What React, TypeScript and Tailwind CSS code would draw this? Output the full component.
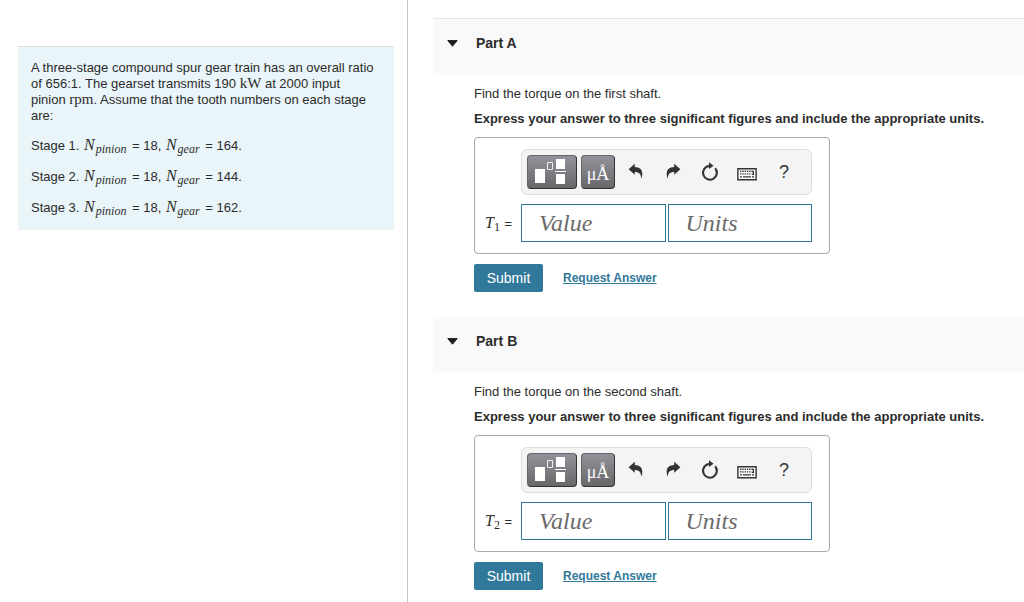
import type { ReactNode } from 'react'

const STAGES = [
  { id: 1, pinion: 18, gear: 164 },
  { id: 2, pinion: 18, gear: 144 },
  { id: 3, pinion: 18, gear: 162 },
]

const PARTS = [
  { letter: 'A', shaft: 'first', index: 1 },
  { letter: 'B', shaft: 'second', index: 2 },
]

export default function App() {
  return (
    <div className="flex h-screen overflow-hidden bg-white font-['Liberation_Sans',Arial,sans-serif] text-[13px] leading-4 text-[#2c2c2c]">
      <aside className="w-[408px] shrink-0 border-r border-[#c3c8d2] pt-[46px] pr-[13px] pl-[18px]">
        <Problem />
      </aside>
      <main className="min-w-0 flex-1 pt-[18px] pl-[25px]">
        {PARTS.map(p => (
          <Part key={p.letter} {...p} />
        ))}
      </main>
    </div>
  )
}

function Problem() {
  return (
    <div className="border-t border-[#d8dcdc] bg-[#e9f5f8] py-[13px] pr-[18px] pl-[13px]">
      <p>
        A three-stage compound spur gear train has an overall ratio of 656:1. The gearset transmits 190{' '}
        <Roman>kW</Roman> at 2000 input pinion <Roman>rpm</Roman>. Assume that the tooth numbers on each stage are:
      </p>
      {STAGES.map(s => (
        <p key={s.id} className="mt-3 leading-[19px]">
          Stage {s.id}. <Variable sub="pinion" /> = {s.pinion}, <Variable sub="gear" /> = {s.gear}.
        </p>
      ))}
    </div>
  )
}

function Roman({ children }: { children: ReactNode }) {
  return <span className="font-['Liberation_Serif',serif] text-[15px] leading-3">{children}</span>
}

function Variable({ sub }: { sub: string }) {
  return (
    <span className="mr-[2px] ml-px font-['Liberation_Serif',serif] text-[16px] leading-3 italic">
      N<sub className="bottom-[-3px] ml-px text-[12px]">{sub}</sub>
    </span>
  )
}

function Part({ letter, shaft, index }: { letter: string; shaft: string; index: number }) {
  return (
    <section className="group mb-[25px]">
      <h2 className="border-[#e6e6e6] bg-[#f9f9f9] text-[14px] font-bold group-first:border-t">
        <button type="button" className="flex w-full items-center gap-[18px] pt-4 pb-6 pl-[14px]">
          <svg width="11" height="7" viewBox="0 0 11 7" aria-hidden="true">
            <path d="M.8.6h9.4L5.5 6.2z" fill="#1d1d1d" stroke="#1d1d1d" strokeLinejoin="round" />
          </svg>
          Part {letter}
        </button>
      </h2>

      <div className="pt-[11px] pl-[41px]">
        <p>Find the torque on the {shaft} shaft.</p>
        <p className="mt-[9px] font-bold">
          Express your answer to three significant figures and include the appropriate units.
        </p>

        <div className="mt-[10px] w-[356px] rounded border border-[#a8a8a8] pt-[11px] pr-[17px] pb-[11px] pl-[10px]">
          <Toolbar />
          <div className="mt-[9px] flex items-center">
            <label
              htmlFor={`value-${index}`}
              className="w-9 shrink-0 font-['Liberation_Serif',serif] text-[16px] whitespace-nowrap"
            >
              <i>T</i>
              <sub className="bottom-[-3px] mr-px text-[12px]">{index}</sub>
              <span className="font-['Liberation_Sans',sans-serif] text-[13px]"> =</span>
            </label>
            <div className="flex flex-1 gap-[2px]">
              <AnswerInput id={`value-${index}`} placeholder="Value" />
              <AnswerInput id={`units-${index}`} placeholder="Units" />
            </div>
          </div>
        </div>

        <div className="mt-[10px] flex items-center gap-5">
          <button type="button" className="h-7 w-[69px] rounded-xs bg-[#31799b] text-[14px] text-white">
            Submit
          </button>
          <a href="#" className="text-[12px] font-bold text-[#31799b] underline">
            Request Answer
          </a>
        </div>
      </div>
    </section>
  )
}

function AnswerInput({ id, placeholder }: { id: string; placeholder: string }) {
  return (
    <input
      id={id}
      type="text"
      aria-label={placeholder}
      placeholder={placeholder}
      className="h-[38px] w-0 min-w-0 flex-1 border border-[#31799b] bg-white px-[17px] font-['Liberation_Serif',serif] text-[24px] placeholder:text-[#6b6b6b] placeholder:italic"
    />
  )
}

function Toolbar() {
  return (
    <div className="ml-9 flex h-[46px] items-center rounded-md border border-[#dedede] bg-[#f4f4f4] pb-px pl-[5px] text-[#333]">
      <DarkButton label="Templates" className="w-[50px]">
        <svg width="34" height="26" viewBox="0 0 34 26" aria-hidden="true">
          <path d="M0 10h10v14H0zM21 0h9v10h-9zM21 15h9v10h-9zM20 12h11v1H20z" fill="#fff" />
          <path d="M12.5 3.5h5v7h-5z" fill="none" stroke="#eee" />
        </svg>
      </DarkButton>
      <DarkButton label="Symbols" className="ml-1 w-[34px]">
        <span className="pt-1 font-['Liberation_Serif',serif] text-[18px] leading-none">μÅ</span>
      </DarkButton>
      <div className="flex items-center gap-[17px] pl-[11px]">
        <IconButton label="Undo">
          <path
            d="M2.6 7.3 8.8 1.8v3.3c4.6.1 7.4 2.4 7.5 6.3 0 2-.3 3.7-1.2 5.1-.1-4.4-1.9-6.3-6.3-6.4v2.7z"
            fill="currentColor"
          />
        </IconButton>
        <IconButton label="Redo">
          <path
            d="M17.4 7.3 11.2 1.8v3.3c-4.6.1-7.4 2.4-7.5 6.3 0 2 .3 3.7 1.2 5.1.1-4.4 1.9-6.3 6.3-6.4v2.7z"
            fill="currentColor"
          />
        </IconButton>
        <IconButton label="Reset">
          <path d="M9.4 3.9a6.9 6.9 0 1 0 5.8 2.4" fill="none" stroke="currentColor" strokeWidth="2.1" />
          <path d="M9 .2 13.6 3.8 9 7z" fill="currentColor" />
        </IconButton>
        <IconButton label="Keyboard shortcuts">
          <path d="M.9 6.7h18.2v11H.9z" fill="#fff" stroke="currentColor" strokeWidth="1.4" />
          <path
            d="M3 9.2h14M3 11.9h11.5"
            fill="none"
            stroke="currentColor"
            strokeWidth="1.4"
            strokeDasharray="1.4 .9"
          />
          <path d="M3 14.9h2M6 14.9h8M15 14.9h2M16.4 9v4M14.8 12.3h2" fill="none" stroke="currentColor" strokeWidth="1.3" />
        </IconButton>
        <button type="button" aria-label="Help" className="w-5 text-[18px] leading-5">
          ?
        </button>
      </div>
    </div>
  )
}

function DarkButton({ label, className, children }: { label: string; className: string; children: ReactNode }) {
  return (
    <button
      type="button"
      aria-label={label}
      className={`flex h-[34px] shrink-0 items-center justify-center rounded border border-[#65656a] border-r-[#333] border-b-[#333] bg-linear-to-b from-[#92929a] to-[#68686b] text-white ${className}`}
    >
      {children}
    </button>
  )
}

function IconButton({ label, children }: { label: string; children: ReactNode }) {
  return (
    <button type="button" aria-label={label}>
      <svg width="20" height="20" viewBox="0 0 20 20" aria-hidden="true">
        {children}
      </svg>
    </button>
  )
}
